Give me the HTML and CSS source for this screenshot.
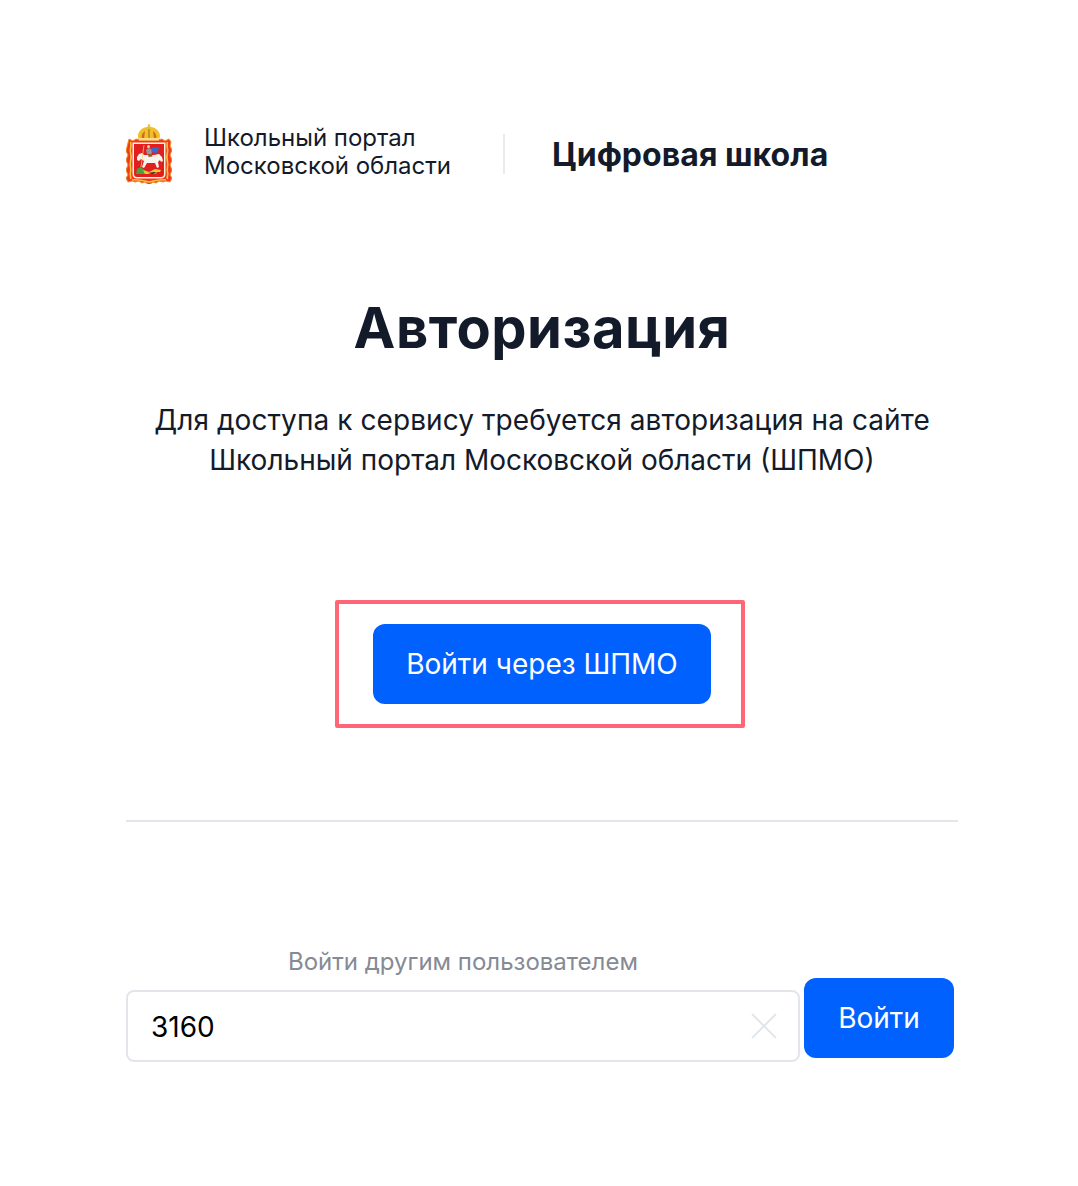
FILE: index.html
```html
<!DOCTYPE html>
<html lang="ru">
<head>
    <meta charset="UTF-8">
    <meta name="viewport" content="width=device-width, initial-scale=1.0">
    <title>Авторизация</title>
    <link rel="stylesheet" href="styles.css">
</head>
<body>
    <div class="page">
        <header class="header">
            <svg class="logo" viewBox="0 0 46 60" width="46" height="60" aria-hidden="true">
                <!-- mantle -->
                <path fill="#ef3a1e" stroke="#f08a24" stroke-width="1" d="M3 15l4 2 3-2 4 1h18l4-1 3 2 4-2 2 3-1 4 2 4-2 5 2 5-2 5 2 5-2 5 2 3-2 4-4-1-3 1-4-1-3 2-3-1-4 3-4-3-3 1-3-2-4 1-3-1-4 1-2-4 2-3-2-5 2-5-2-5 2-5-2-4 1-4z"/>
                <path fill="none" stroke="#fbc53f" stroke-width="1.600" d="M4.500 18c2 4-1 6 0 10s1 6 0 10 1 6 0 10 1 4 0 7M41.500 18c-2 4 1 6 0 10s-1 6 0 10-1 6 0 10-1 4 0 7M6 56c6-1 12 1 17 2 5-1 11-3 17-2"/>
                <!-- crown -->
                <path fill="#efc02e" d="M13 16c-3-6 1-12 8-13l1.300-1-.8-1L23 0l1.500 1-.8 1 1.300 1c7 1 11 7 8 13z"/>
                <path fill="#d8661f" d="M16 15c-1-3 0-6 3-8l-1 8zM30 15c1-3 0-6-3-8l1 8z"/>
                <path fill="#b5801c" d="M22.300 15V5h1.400v10z"/>
                <path fill="#f8de7e" d="M13 14h20v2.500H13z"/>
                <!-- shield -->
                <path fill="#fff3dc" d="M6.500 18.500h33V50c0 3-2 4.500-4.500 4.500H11c-2.500 0-4.500-1.500-4.500-4.500z"/>
                <path fill="#e21f20" d="M8 20h30v30c0 2-1 3-3 3H11c-2 0-3-1-3-3z"/>
                <!-- george -->
                <path fill="#3c6bc4" d="M25 24l8-1-.5 3-2 3-5-1z"/>
                <path fill="#f7f4ec" d="M11 33l2-3 3-1 2 2 10 0 5-1 3 3 1 4-2 1-1-2-2 2 1 5-2 1-2-5-8 0-3 5-2-1 2-6-3-2-2 2-2-1z"/>
                <path fill="#93979f" d="M20 26l2.500-2 2.500 1 1 4-2 2-3-1z"/>
                <path fill="#9a5a2c" d="M22 30h4l.5 2.500-4 .5z"/>
                <circle cx="22.500" cy="22.500" r="1.500" fill="#f5d68a"/>
                <path fill="none" stroke="#f5d774" stroke-width=".7" d="M18 21l-3 22"/>
                <!-- dragon -->
                <path fill="#46a33f" d="M10 50l1-5 4-2 3 3 4 2 1 2z"/>
                <path fill="#f1c62e" d="M17 46l6 2 6-3 6 1-1 2-3 0-1 2H19z"/>
                <path fill="#2e2a20" d="M22 49l6-1 3 1-5 1z"/>
            </svg>
            <div class="portal-name">Школьный портал<br>Московской области</div>
            <div class="header-sep"></div>
            <div class="service-name">Цифровая школа</div>
        </header>

        <main class="auth">
            <h1 class="auth-title">Авторизация</h1>
            <p class="auth-text"><span class="auth-line">Для доступа к сервису требуется авторизация на сайте</span><br>Школьный портал Московской области (ШПМО)</p>
            <div class="highlight">
                <button class="btn btn-main" type="button">Войти через ШПМО</button>
            </div>
        </main>

        <hr class="divider">

        <section class="other-user">
            <div class="other-label">Войти другим пользователем</div>
            <div class="other-row">
                <div class="field">
                    <input class="field-input" type="text" value="3160">
                    <svg class="field-clear" viewBox="0 0 28 28" width="28" height="28" aria-hidden="true">
                        <path d="M2 2l24 24M26 2L2 26" fill="none" stroke="#e2e7eb" stroke-width="2"/>
                    </svg>
                </div>
                <button class="btn btn-login" type="button">Войти</button>
            </div>
        </section>
    </div>
</body>
</html>
```

FILE: styles.css
```css
* { box-sizing: border-box; margin: 0; padding: 0; }
html, body { height: 100%; }
body {
    background: #fff;
    color: #131a29;
    font-family: 'Inter', 'Liberation Sans', sans-serif;
}
.page {
    width: 832px;
    margin-left: 126px;
    padding-top: 124px;
}
.header {
    display: flex;
    align-items: center;
    height: 60px;
}
.logo { flex: none; }
.portal-name {
    margin-left: 32px;
    padding-bottom: 4px;
    font-size: 24px;
    line-height: 28px;
    white-space: nowrap;
}
.header-sep {
    width: 2px;
    height: 40px;
    margin-left: 52px;
    background: #e8ebee;
}
.service-name {
    margin-left: 47px;
    font-size: 32px;
    font-weight: 700;
    letter-spacing: 0.05px;
    white-space: nowrap;
}
.auth {
    display: flex;
    flex-direction: column;
    align-items: center;
    width: 832px;
}
.auth-title {
    margin-top: 108px;
    font-size: 56px;
    line-height: 72px;
    font-weight: 700;
    letter-spacing: 0.5px;
    text-align: center;
}
.auth-text {
    margin-top: 36px;
    font-size: 28px;
    line-height: 40px;
    text-align: center;
}
.auth-line { letter-spacing: 0.08px; }
.highlight {
    display: flex;
    justify-content: center;
    width: 410px;
    height: 128px;
    margin-top: 120px;
    margin-right: 4px;
    padding-top: 20px;
    padding-left: 4px;
    border: 4px solid #ff6678;
    border-radius: 2px;
}
.btn {
    border: none;
    border-radius: 12px;
    background: #0061ff;
    color: #fff;
    font-family: inherit;
    font-size: 28px;
    cursor: pointer;
}
.btn-main {
    width: 338px;
    height: 80px;
}
.divider {
    height: 2px;
    margin-top: 92px;
    border: none;
    background: #e2e6ea;
}
.other-user { margin-top: 124px; }
.other-label {
    padding-left: 162px;
    font-size: 24px;
    line-height: 32px;
    color: #858a94;
}
.other-row {
    display: flex;
    gap: 4px;
    align-items: flex-start;
}
.field {
    position: relative;
    width: 674px;
    height: 72px;
    margin-top: 12px;
}
.field-input {
    width: 100%;
    height: 100%;
    padding: 2px 70px 0 23px;
    border: 2px solid #e2e6ea;
    border-radius: 8px;
    outline: none;
    color: #000;
    font-family: inherit;
    font-size: 28px;
}
.field-clear {
    position: absolute;
    top: 22px;
    right: 22px;
}
.btn-login {
    width: 150px;
    height: 80px;
}
```
